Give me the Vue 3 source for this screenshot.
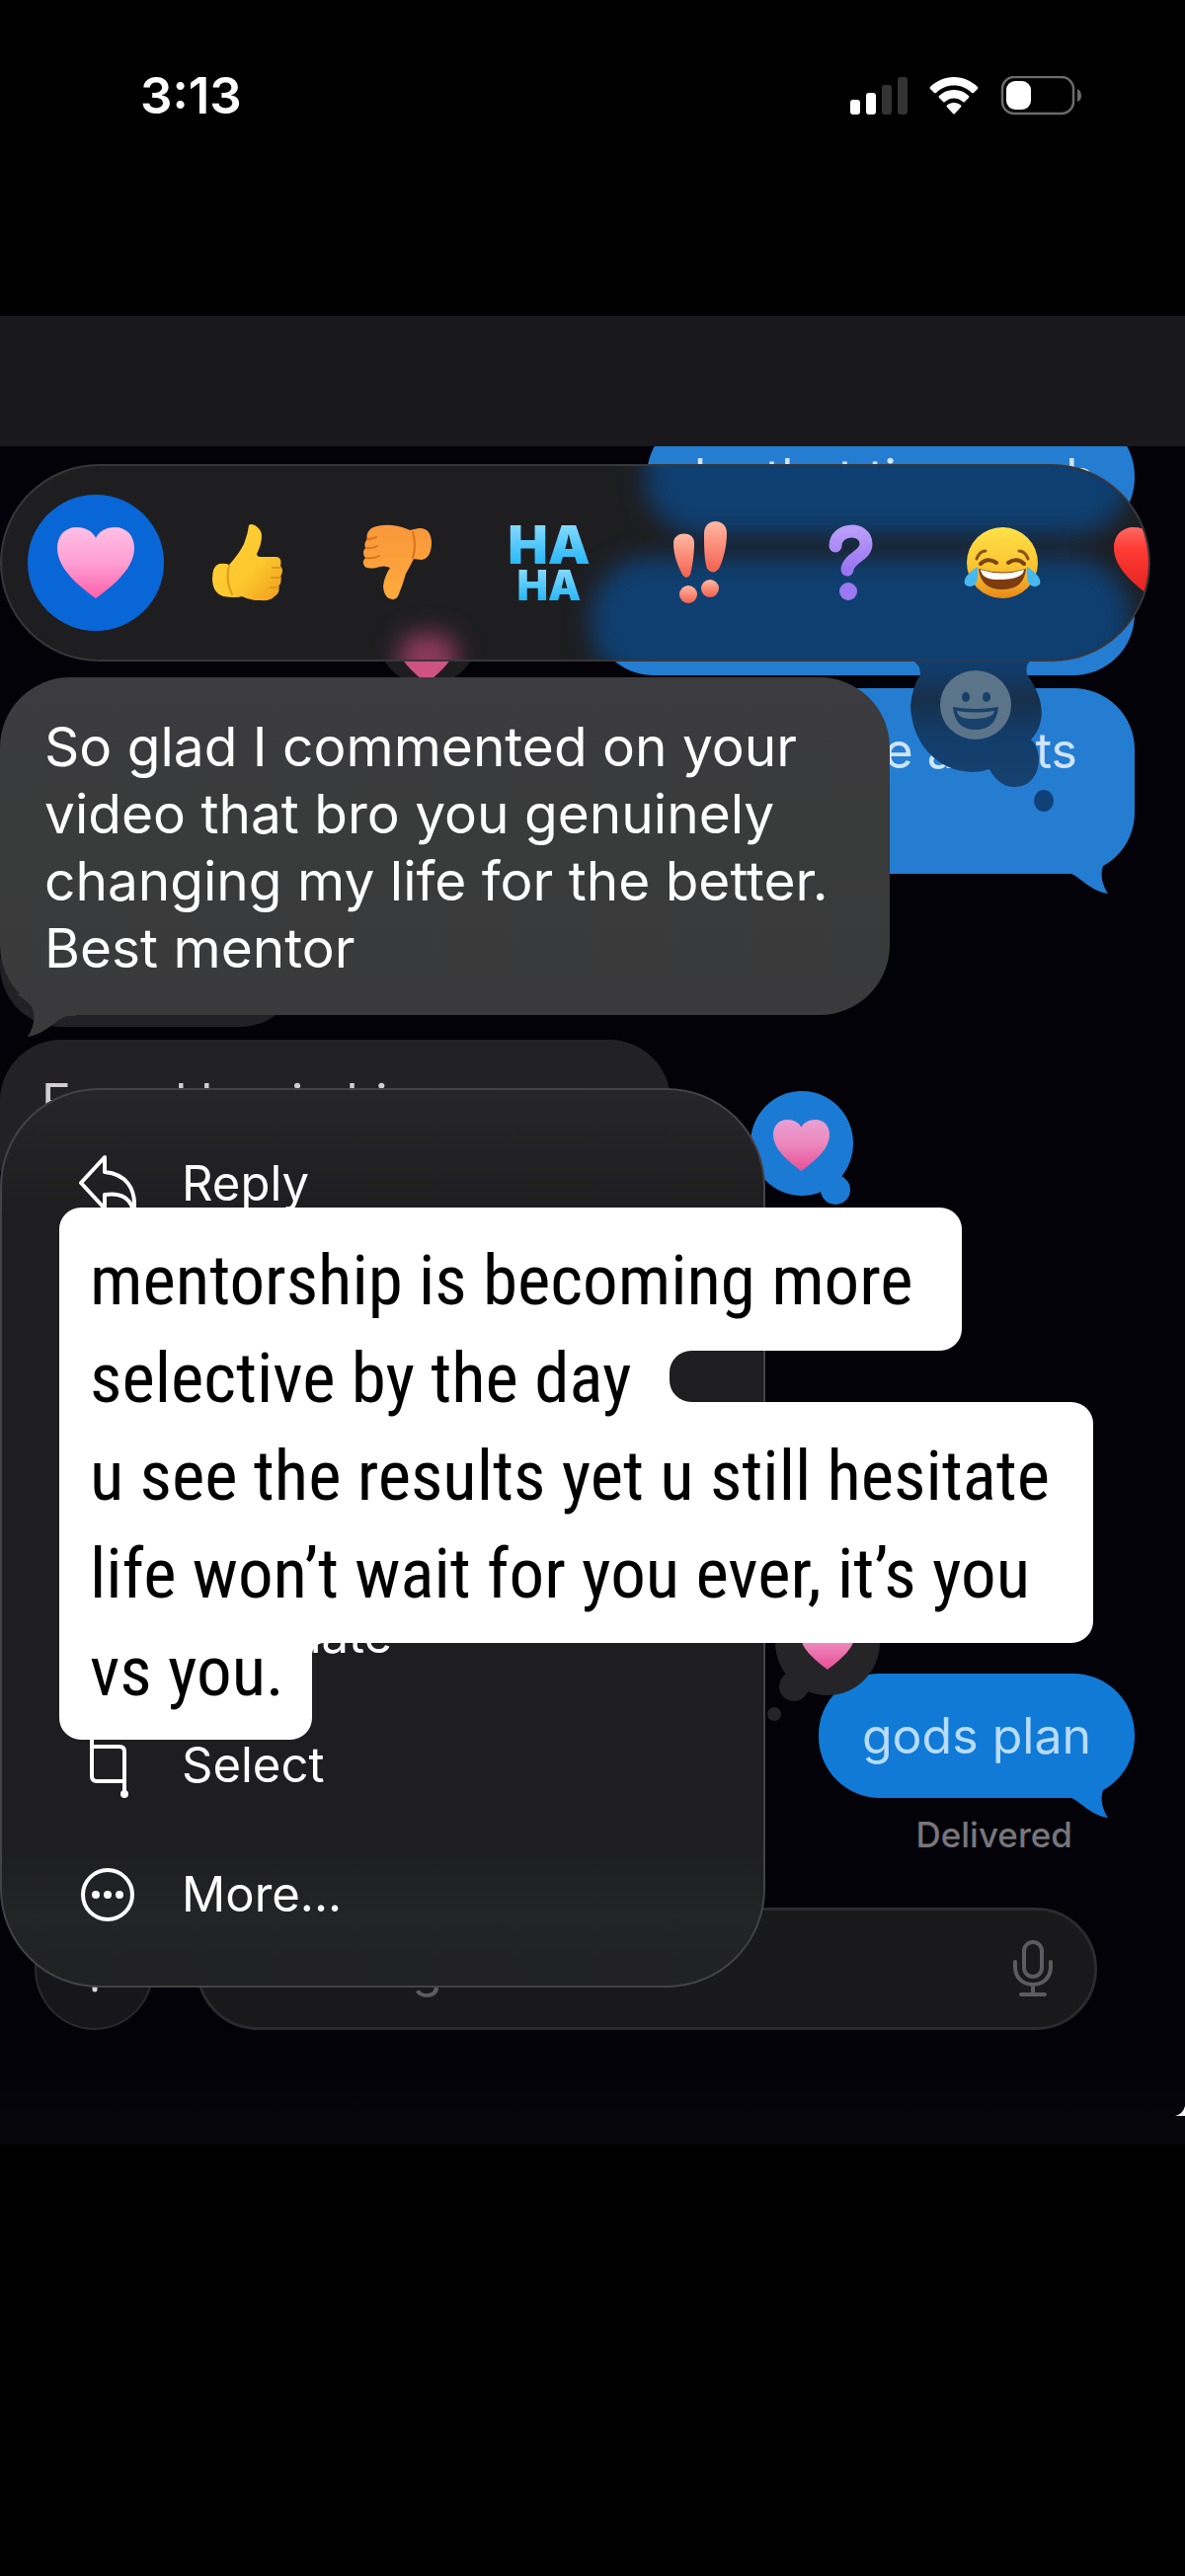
<script setup>
const captionLines = [
  'mentorship is becoming more',
  'selective by the day',
  'u see the results yet u still hesitate',
  'life won’t wait for you ever, it’s you',
  'vs you.',
]
const heart = 'M50 100C36 88 0 62 0 29C0 11 11 0 25 0C37 0 46 6 50 15C54 6 63 0 75 0C89 0 100 11 100 29C100 62 64 88 50 100Z'
const tail = 'M0 22H10C22 27 32 41 49 43C43 34 41 24 44 15C46 9 54 4 60 0H0Z'
</script>

<template>
  <main class="phone">
    <svg class="defs" aria-hidden="true">
      <defs>
        <linearGradient id="pink" x1="0" y1="0" x2="0" y2="1">
          <stop offset="0" stop-color="#ffbfe6" /><stop offset=".5" stop-color="#ff9fd3" /><stop offset="1" stop-color="#ff5fa8" />
        </linearGradient>
        <linearGradient id="rose" x1="0" y1="0" x2="0" y2="1">
          <stop offset="0" stop-color="#e9a0d4" /><stop offset=".5" stop-color="#ec86bb" /><stop offset="1" stop-color="#e84f96" />
        </linearGradient>
        <linearGradient id="red" x1="0" y1="0" x2="0" y2="1">
          <stop offset="0" stop-color="#ff6a62" /><stop offset=".3" stop-color="#ff3b34" /><stop offset="1" stop-color="#e01f1f" />
        </linearGradient>
        <linearGradient id="yellow" x1="0" y1="0" x2="1" y2="1">
          <stop offset="0" stop-color="#ffd23a" /><stop offset=".6" stop-color="#fcc72c" /><stop offset="1" stop-color="#f09a1e" />
        </linearGradient>
        <linearGradient id="orange" x1="0" y1="0" x2="0" y2="1">
          <stop offset="0" stop-color="#f9973a" /><stop offset="1" stop-color="#ffab3d" />
        </linearGradient>
        <linearGradient id="coral" x1="0" y1="0" x2="0" y2="1">
          <stop offset="0" stop-color="#ffb9a3" /><stop offset="1" stop-color="#f4604f" />
        </linearGradient>
        <linearGradient id="violet" x1="0" y1="0" x2="0" y2="1">
          <stop offset="0" stop-color="#b79cf8" /><stop offset="1" stop-color="#9a74f2" />
        </linearGradient>
        <linearGradient id="face" x1="0" y1="0" x2="0" y2="1">
          <stop offset="0" stop-color="#ffe14a" /><stop offset=".55" stop-color="#fbc530" /><stop offset="1" stop-color="#e8891a" />
        </linearGradient>
        <linearGradient id="navy" x1="0" y1="0" x2="0" y2="1">
          <stop offset="0" stop-color="#0f3f70" /><stop offset=".3" stop-color="#17304b" /><stop offset=".6" stop-color="#123d6a" /><stop offset="1" stop-color="#17416f" />
        </linearGradient>
      </defs>
    </svg>

    <header class="status">
      <time class="clock">3:13</time>
      <div class="signals">
        <svg width="58" height="38" viewBox="0 0 58 38" aria-label="Signal">
          <rect y="23" width="10" height="15" rx="3" fill="#fff" />
          <rect x="16" y="16" width="10" height="22" rx="3" fill="#fff" />
          <rect x="32" y="8" width="10" height="30" rx="3" fill="#333" />
          <rect x="48" width="10" height="38" rx="3" fill="#333" />
        </svg>
        <svg width="50" height="38" viewBox="0 0 50 38" fill="#fff" aria-label="Wi-Fi">
          <path d="M25 0C34 0 43 4 49 10Q50 11 49 12L45 16Q44 16.500 43 16C38 11 32 8.500 25 8.500S12 11 7 16Q6 16.500 5 16L1 12Q0 11 1 10C7 4 16 0 25 0Z" />
          <path d="M25 13C31 13 36 15 40 19Q41 20 40 21L36 25Q35 26 34 25C31 22.500 28 21.500 25 21.500S19 22.500 16 25Q15 26 14 25L10 21Q9 20 10 19C14 15 19 13 25 13Z" />
          <path d="M25 26C28 26 30 27 32 28.500Q33 29.500 32 30.500L26 37Q25 38 24 37L18 30.500Q17 29.500 18 28.500C20 27 22 26 25 26Z" />
        </svg>
        <svg width="82" height="40" viewBox="0 0 82 40" aria-label="Battery">
          <rect x="2" y="1" width="72" height="37" rx="12" fill="none" stroke="#6b6b6b" stroke-width="2.500" />
          <rect x="6" y="5" width="25" height="29" rx="9" fill="#fff" />
          <path d="M78 13Q82 15 82 20T78 26Z" fill="#6b6b6b" />
        </svg>
      </div>
    </header>

    <div class="navband"></div>

    <section class="chat">
      <div class="stream">
        <p class="bubble sent first">by that time such</p>
        <p class="bubble sent second"></p>
        <p class="bubble sent third">the assets
          <svg class="tail" width="60" height="44" viewBox="0 0 60 44"><path :d="tail" /></svg>
        </p>
        <p class="bubble received short"></p>
        <p class="bubble received long">Found her in his</p>
        <p class="bubble sent plan">gods plan
          <svg class="tail" width="60" height="44" viewBox="0 0 60 44"><path :d="tail" /></svg>
        </p>
        <p class="delivered">Delivered</p>
        <form class="composer" @submit.prevent>
          <button class="add" type="button" aria-label="Add">
            <svg width="48" height="48" viewBox="0 0 48 48" stroke="#d8d8dc" stroke-width="5" stroke-linecap="round"><path d="M24 3V45M3 24H45" /></svg>
          </button>
          <div class="field">
            <input type="text" placeholder="iMessage" aria-label="Message" />
            <svg width="40" height="58" viewBox="0 0 40 58" fill="none" stroke="#5c5c60" stroke-width="4" stroke-linecap="round">
              <rect x="11" y="2" width="18" height="35" rx="9" />
              <path d="M2 22V27C2 38 10 45 20 45S38 38 38 27V22M20 45V54M8 55H32" />
            </svg>
          </div>
        </form>
      </div>

      <svg class="tapback faded" width="104" height="120" viewBox="0 0 104 120">
        <ellipse cx="52" cy="54" rx="52" ry="54" fill="#1d1d20" />
        <svg x="20" y="44" width="62" height="62" viewBox="0 0 100 100"><path :d="heart" fill="#cf5285" /></svg>
      </svg>
      <svg class="tapback mine" width="106" height="118" viewBox="0 0 106 118">
        <g fill="#1b7bd4"><ellipse cx="53" cy="53" rx="52" ry="53" /><circle cx="87" cy="100" r="15" /></g>
        <svg x="24" y="29" width="57" height="52" viewBox="0 0 100 100" preserveAspectRatio="none"><path :d="heart" fill="url(#rose)" /></svg>
      </svg>
      <svg class="tapback theirs" width="114" height="136" viewBox="0 0 114 136">
        <g fill="#252527"><ellipse cx="61" cy="53" rx="53" ry="54" /><circle cx="27" cy="98" r="15" /><circle cx="7" cy="126" r="7" /></g>
        <svg x="33" y="29" width="56" height="52" viewBox="0 0 100 100" preserveAspectRatio="none"><path :d="heart" fill="url(#rose)" /></svg>
      </svg>
      <svg class="corner" width="10" height="10" viewBox="0 0 10 10"><path d="M10 0V10H0Q8 8 10 0Z" fill="#fff" /></svg>

      <div class="overlay">
        <div class="bar-wrap">
          <div class="bar">
            <span class="glow glow-top"></span>
            <span class="glow glow-bottom"></span>
            <span class="glow glow-pink"></span>
            <button class="react chosen" aria-label="Heart">
              <svg width="78" height="72" viewBox="0 0 100 100" preserveAspectRatio="none"><path :d="heart" fill="url(#pink)" /></svg>
            </button>
            <button class="react" aria-label="Thumbs up">
              <svg width="72" height="78" viewBox="0 0 72 78">
                <path d="M38 1Q40-1 44 1Q51 5 51 12Q51 20 46 30Q46 33 50 33H66Q72 34 70 42Q74 47 70 53Q72 59 68 63Q70 69 64 73Q60 78 50 77Q38 77 31 73Q26 75 12 73Q1 69 1 55Q1 42 8 40Q14 39 18 41Q28 30 33 20Q37 10 38 1Z" fill="url(#yellow)" />
                <path d="M62 44H70M61 54H70M60 64H68M18 42Q14 56 21 71" fill="none" stroke="#dc9a1b" stroke-width="2" stroke-linecap="round" />
              </svg>
            </button>
            <button class="react" aria-label="Thumbs down">
              <svg width="72" height="78" viewBox="0 -1 72 78">
                <path d="M9 3Q18-1 30 0Q40 1 48 5L57 3Q69 2 70 17Q70 33 60 35L52 34Q48 42 44 49Q41 60 36 72Q33 77 27 74Q22 72 21 62Q22 52 28 43Q22 40 14 43Q2 45 1 39Q0 36 3 33Q-1 28 3 23Q1 18 5 14Q3 8 9 3Z" fill="url(#orange)" />
                <path d="M4 33Q12 34 17 31M4 23Q10 24 15 21M5 14Q10 14 14 12M51 7Q55 20 51 33" fill="none" stroke="#d9731c" stroke-width="2" stroke-linecap="round" />
              </svg>
            </button>
            <button class="react haha"><span>HA</span><span class="small">HA</span></button>
            <button class="react" aria-label="Emphasize">
              <svg width="56" height="84" viewBox="0 0 56 84" fill="url(#coral)">
                <path d="M1 22C1 10 22 9 22 22C22 34 20 46 18 54Q14 60 10 54C5 44 1 34 1 22Z" />
                <path d="M32 12C32-4 55-4 55 12C55 26 51 40 47 48Q41 55 35 48C32 38 32 26 32 12Z" />
                <circle cx="16" cy="74" r="9" /><circle cx="38" cy="68" r="9" />
              </svg>
            </button>
            <button class="react" aria-label="Question">
              <svg width="46" height="78" viewBox="0 0 46 78">
                <path d="M7 22C7 3 38 2 38 20C38 32 20 34 19 46" fill="none" stroke="url(#violet)" stroke-width="13" stroke-linecap="round" />
                <circle cx="20" cy="68" r="9" fill="#9c78f3" />
              </svg>
            </button>
            <button class="react" aria-label="Joy">
              <svg width="78" height="74" viewBox="0 0 78 74">
                <ellipse cx="39" cy="37" rx="36" ry="36" fill="url(#face)" />
                <path d="M13 33Q16 25 22 25M65 33Q62 25 56 25" fill="none" stroke="#8a5312" stroke-width="3" stroke-linecap="round" />
                <path d="M17 38Q24 31 33 37M45 37Q54 31 61 38" fill="none" stroke="#7a450e" stroke-width="4" stroke-linecap="round" />
                <path d="M15 43Q39 50 63 43Q61 64 39 64T15 43Z" fill="#7c3c10" />
                <path d="M17 44Q39 51 61 44Q60 53 39 54T17 44Z" fill="#fff" />
                <path d="M14 41Q16 60 7 61Q-1 61 1 54Q3 48 14 41ZM64 41Q62 60 71 61Q79 61 77 54Q75 48 64 41Z" fill="#46b9f0" />
              </svg>
            </button>
            <button class="react" aria-label="Red heart">
              <svg width="80" height="72" viewBox="0 0 100 100" preserveAspectRatio="none"><path :d="heart" fill="url(#red)" /></svg>
            </button>
          </div>
          <svg class="picker" width="152" height="156" viewBox="0 0 152 156">
            <g fill="url(#navy)">
              <path d="M8 0H128Q122 4 124 14C146 44 140 68 128 80C142 92 138 128 112 128C98 128 90 118 86 110C50 122 8 96 6 46Q8 26 16 14Q16 4 8 0Z" />
            </g>
            <ellipse cx="141" cy="142" rx="10" ry="11" fill="#0f4077" />
            <ellipse cx="72" cy="45" rx="36" ry="35" fill="#5c7489" />
            <g fill="#17406a"><ellipse cx="62" cy="37" rx="4" ry="5" /><ellipse cx="83" cy="37" rx="4" ry="5" /><path d="M49 47Q72 51 95 47Q93 70 72 70T49 47Z" /></g>
            <path d="M53 51Q72 54 91 51Q90 58 72 59T53 51Z" fill="#5c7489" />
          </svg>
        </div>

        <p class="focus">
          So glad I commented on your<br />video that bro you genuinely<br />changing my life for the better.<br />Best mentor
          <svg class="tail" width="60" height="44" viewBox="0 0 60 44"><path :d="tail" /></svg>
        </p>

        <div class="menu">
          <button class="item reply">
            <svg width="58" height="58" viewBox="0 0 58 58" fill="none" stroke="#fff" stroke-width="4" stroke-linejoin="round">
              <path d="M26 2L2 28L26 54V40C40 38 50 42 54 53Q55 57 56 53C57 34 48 19 26 17Z" />
            </svg>
            Reply
          </button>
          <button class="item"><span class="blank"></span>Translate</button>
          <button class="item">
            <svg width="58" height="76" viewBox="0 0 58 76" fill="none" stroke="#fff" stroke-width="4">
              <path d="M13 4V49Q13 54 18 54H46M13 19H41Q46 19 46 24V66" /><circle cx="46" cy="67" r="4" fill="#fff" stroke="none" />
            </svg>
            Select
          </button>
          <button class="item">
            <svg width="58" height="58" viewBox="0 0 58 58" fill="#fff">
              <circle cx="29" cy="29" r="25" fill="none" stroke="#fff" stroke-width="4" />
              <circle cx="17" cy="29" r="4" /><circle cx="29" cy="29" r="4" /><circle cx="41" cy="29" r="4" />
            </svg>
            More...
          </button>
        </div>
      </div>

      <div class="caption">
        <svg width="1047" height="539" viewBox="0 0 1047 539" aria-hidden="true">
          <path fill="#fff" d="M22 0H892a22 22 0 0 1 22 22V123a22 22 0 0 1-22 22H640a22 22 0 0 0-22 22V175a22 22 0 0 0 22 22H1025a22 22 0 0 1 22 22V419a22 22 0 0 1-22 22H268a12 12 0 0 0-12 12V517a22 22 0 0 1-22 22H22a22 22 0 0 1-22-22V22A22 22 0 0 1 22 0Z" />
        </svg>
        <p v-for="line in captionLines" :key="line">{{ line }}</p>
      </div>
    </section>
  </main>
</template>

<style>
body { background: #000; }
</style>

<style scoped>
.phone { position: relative; min-height: 100vh; background: #000; color: #fff; font-family: Inter, "Liberation Sans", sans-serif; overflow: hidden; }
.phone * { box-sizing: border-box; }
p { margin: 0; }
svg { display: block; flex: none; }
button { border: 0; padding: 0; background: none; color: inherit; font: inherit; }
.defs { position: absolute; width: 0; height: 0; }

.status { height: 320px; padding: 66px 105px 0 142px; display: flex; justify-content: space-between; align-items: flex-start; }
.clock { font-size: 51px; line-height: 62px; font-weight: 600; }
.signals { display: flex; align-items: center; gap: 22px; padding-top: 11px; }

.navband { height: 132px; background: #19191d; }

.chat { position: relative; overflow: hidden; background: linear-gradient(#030208 96%, #07060c 99%); }
.stream { margin-top: -32px; padding: 0 51px 116px 0; display: flex; flex-direction: column; align-items: flex-end; }
.bubble { position: relative; min-height: 125px; padding: 32px 48px; border-radius: 62px; font-size: 50px; line-height: 62px; margin-bottom: 13px; white-space: nowrap; }
.sent { background: #247dd1; color: #cfe4fb; }
.sent .tail { position: absolute; right: 16px; bottom: -21px; fill: #247dd1; }
.received { align-self: flex-start; background: #222226; color: #d0ced2; padding: 32px 42px; }
.first { width: 494px; }
.second { width: 549px; }
.third { width: 400px; min-height: 188px; padding-right: 58px; text-align: right; margin-bottom: 30px; }
.short { width: 305px; }
.long { width: 679px; min-height: 187px; }
.plan { margin-top: 442px; margin-bottom: 16px; padding: 32px 44px; background: #107ad6; color: #b8dcff; }
.plan .tail { fill: #107ad6; }
.delivered { padding-right: 63px; font-size: 35px; line-height: 42px; font-weight: 500; color: #77767c; }

.composer { align-self: stretch; display: flex; align-items: center; gap: 43px; margin: 53px 38px 0 35px; }
.add { width: 121px; height: 124px; flex: none; display: flex; align-items: center; justify-content: center; border: 2px solid #2a2a2e; border-radius: 50%; background: #17171b; }
.field { flex: 1; min-width: 0; height: 124px; display: flex; align-items: center; padding: 0 42px 0 46px; border: 3px solid #2b2b2f; border-radius: 62px; background: #19191c; }
.field input { flex: 1; min-width: 0; border: 0; background: none; color: #fff; font: 50px/62px Inter, sans-serif; }
.field input::placeholder { color: #5c5c60; opacity: 1; }

.tapback { position: absolute; }
.faded { left: 381px; top: 134px; }
.mine { left: 759px; top: 653px; }
.theirs { left: 777px; top: 1158px; }
.corner { position: absolute; right: 0; bottom: 29px; }

.overlay { position: absolute; inset: 0; padding-top: 18px; display: flex; flex-direction: column; align-items: flex-start; }
.bar-wrap { position: relative; width: calc(100% - 35px); margin-bottom: 16px; }
.bar { position: relative; height: 200px; display: flex; align-items: center; gap: 15px; padding-left: 26px; overflow: hidden; border: 2px solid #37373b; border-radius: 100px; background: #1e1e21; }
.glow { position: absolute; border-radius: 62px; background: #0f3f70; filter: blur(12px); }
.glow-top { right: 18px; top: -50px; width: 492px; height: 121px; }
.glow-bottom { right: 18px; top: 92px; width: 547px; height: 130px; }
.glow-pink { left: 402px; top: 170px; width: 58px; height: 50px; border-radius: 20px; background: #8f3a5e; }
.react { position: relative; width: 138px; height: 138px; flex: none; display: flex; flex-direction: column; align-items: center; justify-content: center; border-radius: 50%; }
.chosen { background: #0966d6; }
.haha { font-size: 54px; line-height: 46px; font-weight: 900; color: #4cc6f8; }
.haha span { background: linear-gradient(#8adcff, #1fb4f7); background-clip: text; color: transparent; }
.haha .small { font-size: 42px; line-height: 36px; }
.picker { position: absolute; left: 916px; top: 199px; }

.focus { position: relative; width: 901px; padding: 36px 45px 34px; margin-bottom: 74px; border-radius: 71px; background: linear-gradient(#3c3b40, #3a3b3b 40%, #3a3a3c); font-size: 55px; line-height: 68px; }
.focus .tail { position: absolute; left: 17px; bottom: -23px; transform: scaleX(-1); fill: #3a3a3c; }

.menu { width: 775px; padding: 29px 0 27px; display: flex; flex-direction: column; border: 2px solid #434347; border-radius: 100px; background: linear-gradient(#26262a, #1e1e21 14%, #1e1e21 84%, #232425 92%, #212124); }
.item { height: 131px; display: flex; align-items: center; gap: 46px; padding-left: 78px; font-size: 49px; line-height: 60px; text-align: left; }
.reply { margin-bottom: 327px; }
.blank { width: 58px; }

.caption { position: absolute; left: 60px; top: 771px; width: 1047px; padding: 24px 31px 20px; }
.caption svg { position: absolute; left: 0; top: 0; }
.caption p { position: relative; color: #000; font: 450 71px/99px "Roboto Condensed", Roboto, "Liberation Sans", sans-serif; white-space: nowrap; }
</style>
